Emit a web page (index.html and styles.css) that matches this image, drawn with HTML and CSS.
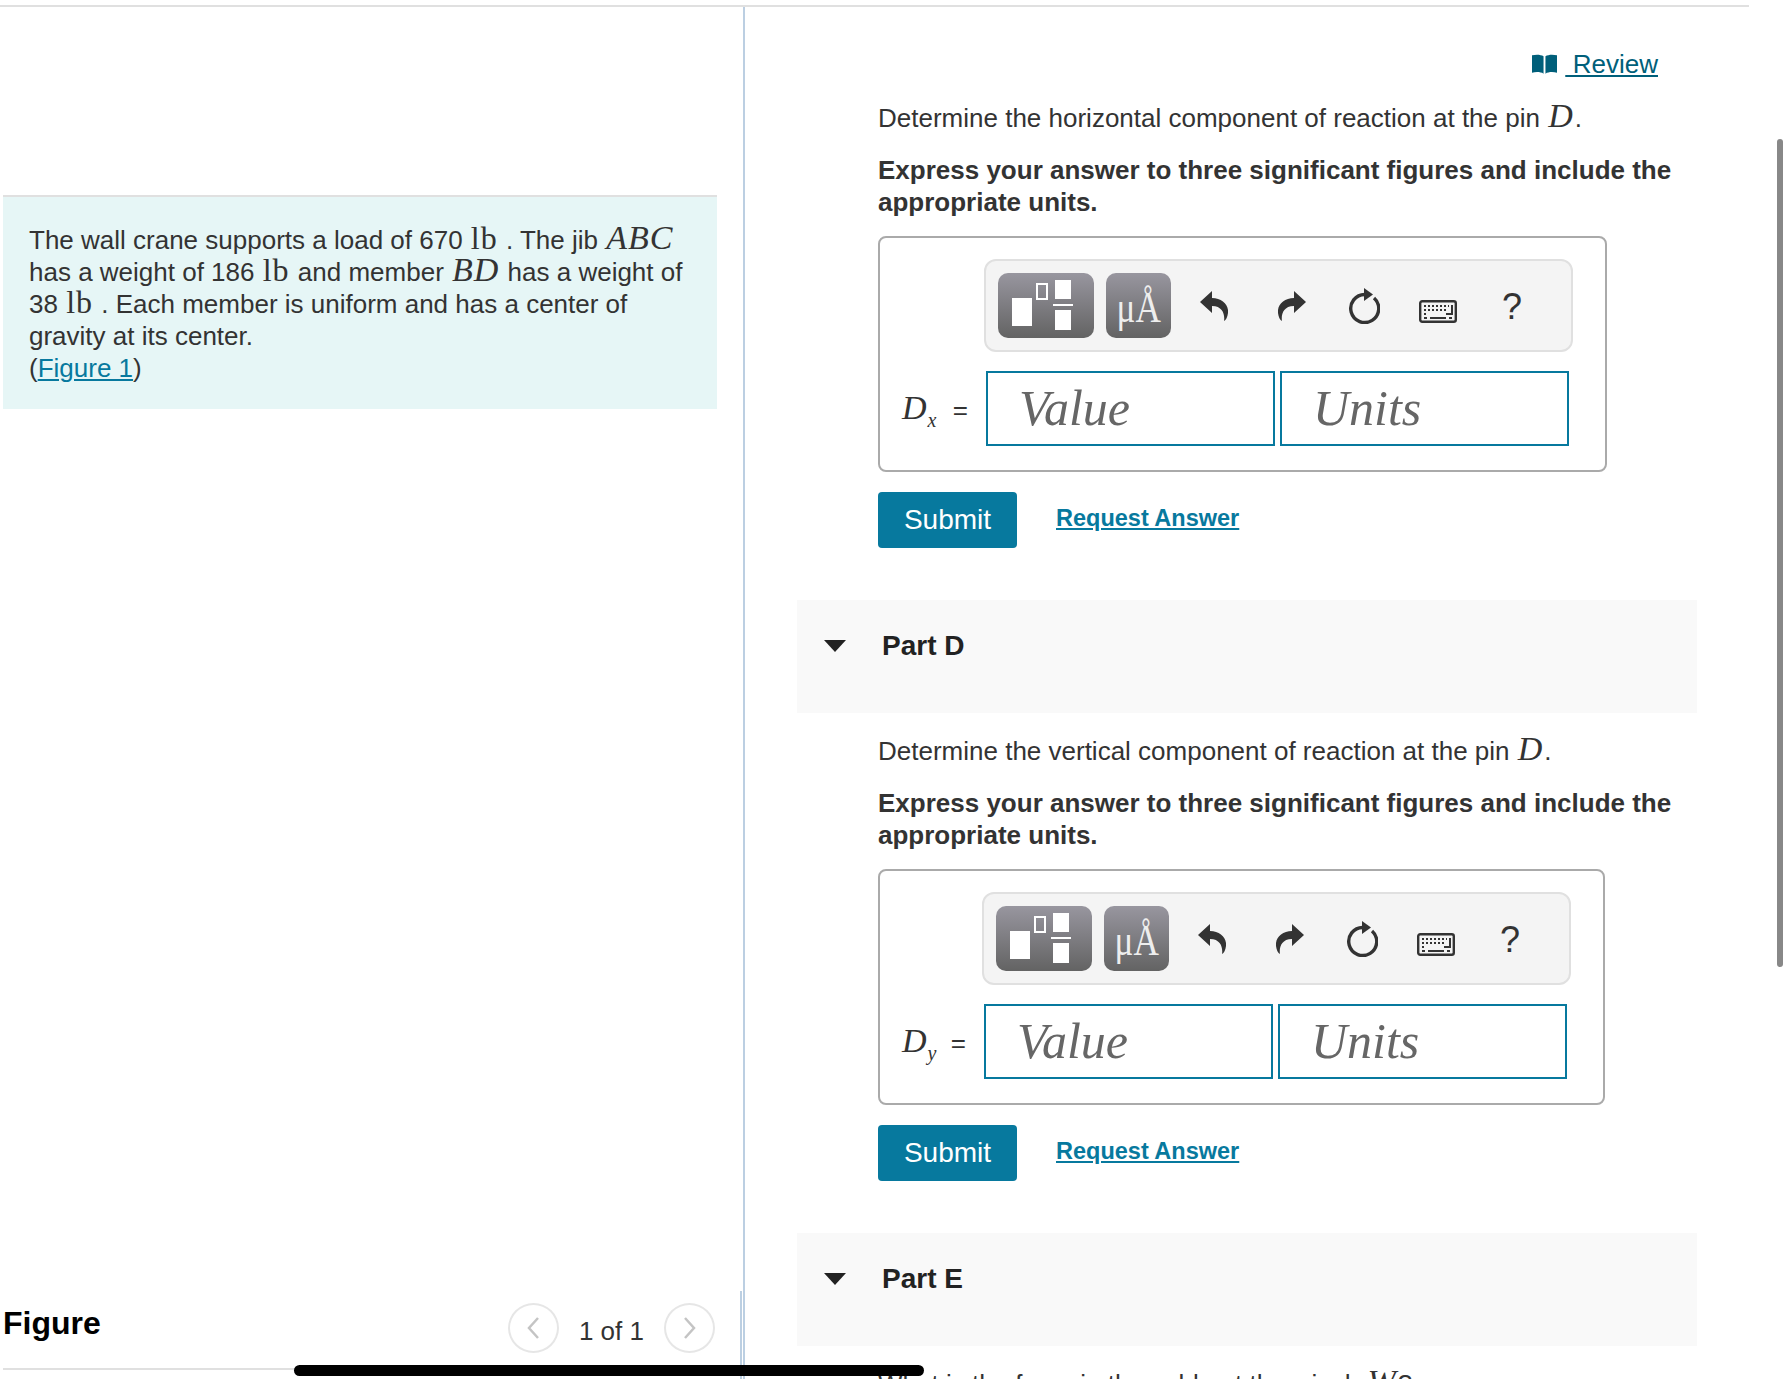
FILE: index.html
```html
<!DOCTYPE html>
<html lang="en">
  <head>
    <meta charset="UTF-8" />
    <title>Wall Crane</title>
    <link rel="stylesheet" href="styles.css">
  </head>
  <body>
    <!-- Shared toolbar icons -->
    <svg class="icon-defs" width="0" height="0">
      <symbol id="icon-undo" viewBox="0 0 28 30">
        <path d="M0 11 L12 0 V7 C22 7 29 14 28 22 C27.5 26 26 29 24 30 C25 24 23 15 12 15 V22 Z" />
      </symbol>
      <symbol id="icon-reset" viewBox="0 0 32 36">
        <path class="icon-line" d="M17 6.5 A14 14 0 1 0 26 10" />
        <path d="M16 0 L25 6.5 L16 13 Z" />
      </symbol>
      <symbol id="icon-keyboard" viewBox="0 0 38 23">
        <rect class="icon-line-thin" x="1.2" y="1.2" width="35.6" height="20.6" rx="2" />
        <path class="icon-dots" d="M5 6 H30 M5 10 H28 M5 14 H9" />
        <path class="icon-keys" d="M33 5 V14 H27 M5 18 H8 M11 18 H27 M30 18 H33" />
      </symbol>
      <symbol id="icon-templates" viewBox="0 0 96 65">
        <rect class="icon-white" x="14" y="25" width="20" height="28" />
        <rect class="icon-hollow" x="39" y="11" width="10" height="15" />
        <rect class="icon-white" x="57" y="7" width="16" height="19" />
        <rect class="icon-white" x="55" y="31" width="20" height="2" />
        <rect class="icon-white" x="57" y="37" width="16" height="20" />
      </symbol>
    </svg>

    <div class="page">
      <!-- Left column: problem text and figure header -->
      <aside class="left-pane">
        <div class="intro">
          The wall crane supports a load of 670 <span class="math-rm">lb</span> . The jib <span class="math">ABC</span>
          has a weight of 186 <span class="math-rm">lb</span> and member <span class="math">BD</span> has a weight of
          38 <span class="math-rm">lb</span> . Each member is uniform and has a center of
          gravity at its center.<br />
          (<a href="#figure">Figure 1</a>)
        </div>
        <div class="figure-head">
          <h2>Figure</h2>
          <div class="pager">
            <span class="pager-btn">
              <svg width="14" height="24" viewBox="0 0 14 24"><path d="M12 2 L3 12 L12 22" /></svg>
            </span>
            <span class="pager-text">1 of 1</span>
            <span class="pager-btn">
              <svg width="14" height="24" viewBox="0 0 14 24"><path d="M2 2 L11 12 L2 22" /></svg>
            </span>
          </div>
        </div>
      </aside>

      <!-- Right column: question parts -->
      <main class="right-pane">
        <div class="review-row">
          <a href="#review" class="review-link">
            <svg width="25" height="21" viewBox="0 0 26 21"><path d="M0 1 C4 0 9 0 12 2 V20 C9 18 4 18 0 19 Z M14 2 C17 0 22 0 26 1 V19 C22 18 17 18 14 20 Z" /></svg>
            <span class="review-text">&nbsp;Review</span>
          </a>
        </div>

        <section class="part-body">
          <p class="question">Determine the horizontal component of reaction at the pin <span class="math">D</span>.</p>
          <p class="instruction">Express your answer to three significant figures and include the appropriate units.</p>
          <div class="answer-box">
            <div class="toolbar">
              <span class="tool-btn tool-templates"><svg width="96" height="65"><use href="#icon-templates" /></svg></span>
              <span class="tool-btn tool-symbols"><span class="symbols-text">μÅ</span></span>
              <svg class="tool-icon icon-undo" width="28" height="30"><use href="#icon-undo" /></svg>
              <svg class="tool-icon icon-redo" width="28" height="30"><use href="#icon-undo" /></svg>
              <svg class="tool-icon icon-reset" width="32" height="36"><use href="#icon-reset" /></svg>
              <svg class="tool-icon icon-keyboard" width="38" height="23"><use href="#icon-keyboard" /></svg>
              <span class="tool-help">?</span>
            </div>
            <div class="answer-label"><span class="math">D<sub class="sub-wide">x</sub></span> <span class="equals">=</span></div>
            <div class="inputs">
              <div class="field">Value</div>
              <div class="field">Units</div>
            </div>
          </div>
          <div class="actions">
            <button class="submit-btn">Submit</button>
            <a href="#answer" class="request-link">Request Answer</a>
          </div>
        </section>

        <section class="part-head">
          <span class="caret"></span>
          <h3>Part D</h3>
        </section>

        <section class="part-body">
          <p class="question">Determine the vertical component of reaction at the pin <span class="math">D</span>.</p>
          <p class="instruction">Express your answer to three significant figures and include the appropriate units.</p>
          <div class="answer-box">
            <div class="toolbar">
              <span class="tool-btn tool-templates"><svg width="96" height="65"><use href="#icon-templates" /></svg></span>
              <span class="tool-btn tool-symbols"><span class="symbols-text">μÅ</span></span>
              <svg class="tool-icon icon-undo" width="28" height="30"><use href="#icon-undo" /></svg>
              <svg class="tool-icon icon-redo" width="28" height="30"><use href="#icon-undo" /></svg>
              <svg class="tool-icon icon-reset" width="32" height="36"><use href="#icon-reset" /></svg>
              <svg class="tool-icon icon-keyboard" width="38" height="23"><use href="#icon-keyboard" /></svg>
              <span class="tool-help">?</span>
            </div>
            <div class="answer-label"><span class="math">D<sub>y</sub></span> <span class="equals">=</span></div>
            <div class="inputs">
              <div class="field">Value</div>
              <div class="field">Units</div>
            </div>
          </div>
          <div class="actions">
            <button class="submit-btn">Submit</button>
            <a href="#answer" class="request-link">Request Answer</a>
          </div>
        </section>

        <section class="part-head">
          <span class="caret"></span>
          <h3>Part E</h3>
        </section>

        <section class="part-body">
          <p class="question">What is the force in the cable at the winch <span class="math">W</span>?</p>
        </section>
      </main>
    </div>

    <!-- Overlaid scrollbars -->
    <div class="scroll-h"></div>
    <div class="scroll-v"></div>
  </body>
</html>
```

FILE: styles.css
```css
/* Global Styles & Variables */
:root {
  --teal: #07799e;
  --text: #333;
  --line: #e0e0e0;
  --sans: "Liberation Sans", Arial, sans-serif;
  --serif: "Liberation Serif", "Times New Roman", serif;
}

* {
  margin: 0;
  padding: 0;
  box-sizing: border-box;
}

html,
body {
  height: 1379px;
  overflow: hidden;
}

body {
  position: relative;
  background: #fff;
  color: var(--text);
  font-family: var(--sans);
  font-size: 26px;
  line-height: 32px;
}

.icon-defs {
  position: absolute;
}

.page {
  display: flex;
  width: 1749px;
  height: 1379px;
  margin-top: 5px;
  border-top: 2px solid var(--line);
}

/* Math */
.math {
  margin: 0 1px;
  font-family: var(--serif);
  font-style: italic;
  font-size: 34px;
  letter-spacing: 1px;
  line-height: 0;
}

.math sub {
  font-size: 20px;
  line-height: 0;
}

.math sub.sub-wide {
  padding-right: 2px;
}

.math-rm {
  margin: 0 1px;
  font-family: var(--serif);
  font-size: 32px;
  letter-spacing: 1px;
  line-height: 0;
}

/* Left pane */
.left-pane {
  position: relative;
  display: flex;
  flex-direction: column;
  width: 745px;
  height: 1372px;
  padding-left: 3px;
  border-right: 2px solid #bccfe2;
}

/* second, slightly offset divider next to the figure header */
.left-pane::after {
  content: "";
  position: absolute;
  right: 1px;
  top: 1284px;
  bottom: 0;
  width: 2px;
  background: #bccfe2;
}

.intro {
  width: 714px;
  height: 214px;
  margin-top: 188px;
  padding: 27px 26px;
  background: #e6f6f6;
  border-top: 2px solid var(--line);
}

.intro a {
  color: var(--teal);
}

.figure-head {
  display: flex;
  align-items: center;
  justify-content: space-between;
  width: 714px;
  height: 83px;
  margin-top: 878px;
  padding: 0 2px 0 0;
  border-bottom: 2px solid var(--line);
}

.figure-head h2 {
  font-size: 32px;
  color: #000;
  margin-top: -10px;
}

.pager {
  display: flex;
  align-items: center;
  gap: 20px;
}

.pager-btn {
  display: flex;
  align-items: center;
  justify-content: center;
  width: 51px;
  height: 50px;
  border: 2px solid #e6e6e6;
  border-radius: 50%;
}

.pager-btn path {
  fill: none;
  stroke: #c4c4c4;
  stroke-width: 2.5;
}

.pager-text {
  margin-top: 6px;
}

/* Right pane */
.right-pane {
  flex: 1;
  padding: 0 52px 0 52px;
}

.review-row {
  display: flex;
  justify-content: flex-end;
  height: 95px;
  padding: 41px 39px 0 0;
}

.review-link {
  display: flex;
  align-items: center;
  height: 32px;
  color: #005f7a;
}

.review-link svg {
  fill: #005f7a;
  margin-right: 9px;
}

.review-text {
  text-decoration: underline;
}

.part-body {
  padding-left: 81px;
}

.question {
  height: 46px;
  margin-bottom: 6px;
}

.instruction {
  font-weight: bold;
  margin-bottom: 18px;
}

/* Answer box */
.answer-box {
  display: grid;
  grid-template-columns: auto 583px;
  align-content: start;
  width: fit-content;
  height: 236px;
  padding: 21px 36px 0 22px;
  border: 2px solid #aaa;
  border-radius: 8px;
}

.toolbar {
  grid-column: 2;
  display: flex;
  align-items: center;
  width: 589px;
  height: 93px;
  margin-left: -2px;
  padding-left: 12px;
  background: #f4f4f4;
  border: 2px solid var(--line);
  border-radius: 12px;
}

.tool-btn {
  display: block;
  height: 65px;
  background: linear-gradient(#98969f, #636363);
  border-radius: 10px;
}

.tool-templates {
  width: 96px;
}

.tool-symbols {
  width: 65px;
  margin-left: 12px;
  padding-top: 19px;
  color: #eee;
  font-family: var(--serif);
  font-size: 44px;
  text-align: center;
}

.symbols-text {
  display: inline-block;
  transform: scaleX(0.8);
}

.tool-icon {
  fill: #333;
  flex: none;
}

.icon-undo {
  margin-left: 29px;
}

.icon-redo {
  margin-left: 50px;
  transform: scaleX(-1);
}

.icon-reset {
  margin-left: 42px;
}

.icon-keyboard {
  margin-left: 39px;
  margin-top: 11px;
}

.tool-help {
  margin-left: 45px;
  font-size: 36px;
  margin-top: 2px;
}

.icon-line {
  fill: none;
  stroke: #333;
  stroke-width: 3.4;
}

.icon-line-thin {
  fill: none;
  stroke: #333;
  stroke-width: 2.4;
}

.icon-dots {
  fill: none;
  stroke: #333;
  stroke-width: 2;
  stroke-dasharray: 2 2;
}

.icon-keys {
  fill: none;
  stroke: #333;
  stroke-width: 2;
}

.icon-white {
  fill: #fff;
}

.icon-hollow {
  fill: none;
  stroke: #fff;
  stroke-width: 2;
}

.answer-label {
  grid-column: 1;
  grid-row: 2;
  padding-right: 18px;
  margin-top: 42px;
  white-space: nowrap;
}

.answer-label .math {
  margin: 0;
}

.equals {
  margin-left: 6px;
}

.inputs {
  grid-column: 2;
  grid-row: 2;
  display: flex;
  gap: 5px;
  height: 75px;
  margin-top: 19px;
}

.field {
  flex: 1;
  padding: 8px 0 0 31px;
  border: 2px solid var(--teal);
  color: #666;
  font-family: var(--serif);
  font-style: italic;
  font-size: 50px;
  line-height: 54px;
}

/* Actions */
.actions {
  display: flex;
  align-items: flex-start;
  gap: 39px;
  margin-top: 20px;
}

.submit-btn {
  width: 139px;
  height: 56px;
  border: none;
  border-radius: 4px;
  background-color: var(--teal);
  color: #fff;
  font-family: var(--sans);
  font-size: 28px;
}

.request-link {
  margin-top: 10px;
  color: var(--teal);
  font-weight: bold;
  font-size: 23.5px;
}

/* Part headers */
.part-head {
  display: flex;
  align-items: center;
  height: 113px;
  margin-top: 52px;
  margin-bottom: 22px;
  padding: 0 0 22px 27px;
  background: #f9f9f9;
}

.caret {
  width: 0;
  height: 0;
  border-left: 11px solid transparent;
  border-right: 11px solid transparent;
  border-top: 12px solid #222;
}

.part-head h3 {
  margin-left: 36px;
  font-size: 28px;
  color: #222;
}

/* Overlays */
.scroll-h {
  position: absolute;
  left: 294px;
  top: 1365px;
  width: 630px;
  height: 11px;
  background: #000;
  border-radius: 6px;
}

.scroll-v {
  position: absolute;
  left: 1777px;
  top: 139px;
  width: 6px;
  height: 828px;
  background: #888;
  border-radius: 4px;
}
```
